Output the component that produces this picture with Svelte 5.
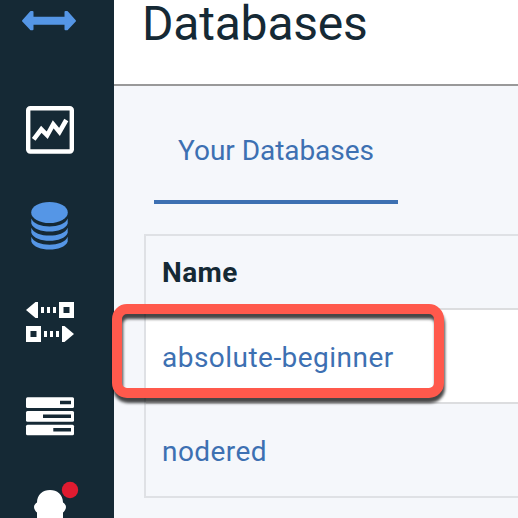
<script>
  const rows = ['absolute-beginner', 'nodered'];
</script>

<div class="app">
  <nav class="sidebar" aria-label="Main">
    <svg viewBox="0 -14 114 96">
      <path fill="#5596e6" stroke="#5596e6" stroke-width="2" stroke-linejoin="round" d="M23 20.8 31 12h1.5V17.8H65.5V12H67L75 20.8 67 29.3H65.5V23.7H32.5V29.3H31Z" />
    </svg>
    <svg viewBox="0 82 114 96">
      <rect x="28.2" y="108.2" width="43.6" height="43.3" rx="2" fill="none" stroke="#fff" stroke-width="4.4" />
      <path d="M33.7 139.3 41.3 129.3 47.2 135.300 53.2 124.300 59.5 132 66.300 120" fill="none" stroke="#fff" stroke-width="4.600" />
    </svg>
    <svg viewBox="0 178 114 96" fill="#5596e6">
      <ellipse cx="49.5" cy="212.5" rx="18.3" ry="10.5" />
      <path d="M31.3 218.500C35 229 64 229 67.7 218.500V223.500C64 234.300 35 234.300 31.3 223.500Z" />
      <path d="M31.3 227.700C35 238.200 64 238.200 67.7 227.700V232.700C64 243.500 35 243.500 31.3 232.700Z" />
      <path d="M31.3 236.800C35 247.300 64 247.300 67.7 236.800V241.500C64 252.300 35 252.300 31.3 241.500Z" />
    </svg>
    <svg viewBox="0 274 114 96" fill="#fff">
      <path d="M26 310 35.5 302H38V318H35.5ZM41 307h3v6h-3zM47 307h3v6h-3zM53 307h3v6h-3z" />
      <path fill-rule="evenodd" d="M59 302h15v16H59zM63.5 307v6h6v-6zM26 326h15v16H26zM30.5 331v6h6v-6z" />
      <path d="M44 331h3v6h-3zM50 331h3v6h-3zM56 331h3v6h-3zM62 326H64.5L74 334 64.5 342H62Z" />
    </svg>
    <svg viewBox="0 370 114 96">
      <g fill="#fff">
        <rect x="26" y="397.3" width="48" height="10.7" rx="1.5" />
        <rect x="26" y="411" width="48" height="10.7" rx="1.5" />
        <rect x="26" y="424.7" width="48" height="10.5" rx="1.5" />
      </g>
      <path fill="#152935" d="M60 400.700h11v3.500H60zM43 414.400h28v3.500H43zM53.3 428.100H71v3.500H53.3z" />
    </svg>
    <svg viewBox="0 466 114 96">
      <path fill="#fff" d="M37 502.500C37 494.500 43 490 50 490S63 494.500 63 502.500C64.500 503.500 66 505 66 507S64.500 511.500 63 512.500V530H37V512.500C35.500 511.500 34 509 34 507S35.500 503.500 37 502.500Z" />
      <circle cx="70" cy="490" r="8.2" fill="#e01b30" />
    </svg>
  </nav>

  <main>
    <header><h1>Databases</h1></header>
    <div class="tabs"><a class="tab" href="#databases"><span>Your Databases</span></a></div>
    <div class="table">
      <div class="row head">Name</div>
      {#each rows as name, i}
        <div class="row" class:selected={i === 0}><a class={i === 0 ? 'beginner' : 'node'} href="#{name}">{name}</a></div>
      {/each}
    </div>
  </main>
  <div class="highlight"></div>
</div>

<style>
  :global(body) { margin: 0; }
  .app {
    position: relative;
    display: flex;
    width: 518px;
    height: 518px;
    overflow: hidden;
    background: #f5f7fb;
    color: #152935;
    font-family: Roboto, "Liberation Sans", sans-serif;
    font-size: 28px;
  }
  .sidebar {
    display: flex;
    flex-direction: column;
    flex: 0 0 114px;
    box-sizing: border-box;
    height: 532px;
    margin-top: -14px;
    background: #152935;
  }
  svg { display: block; flex: 0 0 96px; width: 114px; height: 96px; }
  main { flex: 1; min-width: 0; }
  header { box-sizing: border-box; height: 86px; padding-left: 28px; background: #fff; border-bottom: 2px solid #999; }
  h1 { margin: 0; font-size: 48px; line-height: 48px; font-weight: 400; letter-spacing: -0.2px; white-space: nowrap; }
  a { color: #3d70b2; text-decoration: none; white-space: nowrap; }
  .tabs { display: flex; padding-left: 40px; }
  .tab { display: flex; justify-content: center; box-sizing: border-box; width: 244px; height: 118px; border-bottom: 4px solid #3d70b2; }
  .tab span { line-height: 130px; letter-spacing: -0.05px; }
  .table { box-sizing: border-box; width: 420px; margin: 30px 0 0 30px; border: 2px solid #dfe1e5; }
  .row { box-sizing: border-box; height: 94px; padding-left: 16px; line-height: 96px; border-bottom: 2px solid #dcdddf; }
  .row:last-child { height: 92px; border-bottom: 0; }
  .row.head { height: 74px; line-height: 73px; font-weight: 700; letter-spacing: 0.4px; }
  .selected { background: #fff; }
  .beginner { letter-spacing: 0.47px; }
  .node { letter-spacing: 0.45px; }
  .highlight {
    position: absolute;
    box-sizing: border-box;
    left: 112px;
    top: 304px;
    width: 332px;
    height: 94px;
    border: 10px solid #ff594c;
    border-radius: 15px;
    filter: drop-shadow(1px 5px 1.5px #000000b8);
  }
</style>
